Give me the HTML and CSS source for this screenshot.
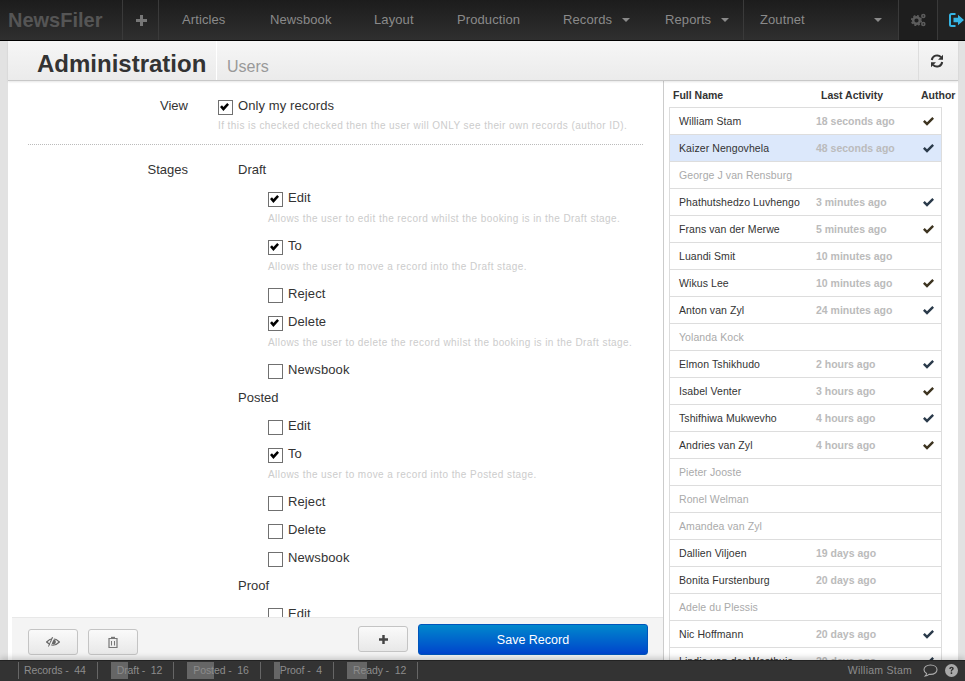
FILE: index.html
```html
<!DOCTYPE html>
<html lang="en">
<head>
    <meta charset="UTF-8">
    <title>NewsFiler - Administration</title>
    <link rel="stylesheet" href="styles.css">
</head>
<body>
    <svg class="defs" width="0" height="0">
        <symbol id="tick" viewBox="0 0 11 9"><path d="M0 4.800L1.700 3.100 4 5.300 9.300 0 11 1.700 4 8.800z"/></symbol>
    </svg>

    <nav class="topbar">
        <div class="brand">NewsFiler</div>
        <div class="add-item">
            <svg width="11" height="11" viewBox="0 0 11 11"><path d="M4 0h3v4h4v3H7v4H4V7H0V4h4z" fill="#777"/></svg>
        </div>
        <ul class="menu">
            <li class="w-articles">Articles</li>
            <li class="w-newsbook">Newsbook</li>
            <li class="w-layout">Layout</li>
            <li class="w-production">Production</li>
            <li class="w-records">Records<span class="caret"></span></li>
            <li class="w-reports">Reports<span class="caret"></span></li>
        </ul>
        <div class="publication">Zoutnet<span class="caret"></span></div>
        <div class="nav-icon gears">
            <svg width="15" height="14" viewBox="0 0 15 14"><circle cx="5.500" cy="7.500" r="3.300" fill="none" stroke="#5c5c5c" stroke-width="2.400"/><circle cx="5.500" cy="7.500" r="4.800" fill="none" stroke="#5c5c5c" stroke-width="1.600" stroke-dasharray="2 1.770"/><circle cx="12.300" cy="3" r="1.500" fill="none" stroke="#5c5c5c" stroke-width="1.600"/><circle cx="12.300" cy="11" r="1.500" fill="none" stroke="#5c5c5c" stroke-width="1.600"/></svg>
        </div>
        <div class="nav-icon logout">
            <svg width="15" height="14" viewBox="0 0 15 14"><path d="M6.500 1H2.500Q1 1 1 2.500v9Q1 13 2.500 13H6.500" fill="none" stroke="#35b5e5" stroke-width="2"/><path d="M4.500 4.800h4.500V1.800L15 7 9 12.200V9.200H4.500z" fill="#35b5e5"/></svg>
        </div>
    </nav>

    <div class="page">
        <header class="page-head">
            <h1>Administration</h1>
            <span class="sub">Users</span>
            <div class="refresh">
                <svg width="14" height="14" viewBox="0 0 14 14"><path d="M1.800 6A5.300 5.300 0 0 1 11 3.200" fill="none" stroke="#333" stroke-width="2"/><path d="M13 0.800v5H8z" fill="#333"/><path d="M12.200 8A5.300 5.300 0 0 1 3 10.800" fill="none" stroke="#333" stroke-width="2"/><path d="M1 13.200v-5h5z" fill="#333"/></svg>
            </div>
        </header>

        <div class="columns">
            <main class="form-pane">
                <div class="form-scroll">
                    <div class="field">
                        <div class="field-label">View</div>
                        <div class="field-body">
                            <label class="check top on">Only my records</label>
                            <p class="hint">If this is checked checked then the user will ONLY see their own records (author ID).</p>
                        </div>
                    </div>
                    <div class="field stages">
                        <div class="field-label">Stages</div>
                        <div class="field-body">
                            <div class="stage">Draft</div>
                            <div class="opts">
                                <label class="check on">Edit</label>
                                <p class="hint">Allows the user to edit the record whilst the booking is in the Draft stage.</p>
                                <label class="check on">To</label>
                                <p class="hint">Allows the user to move a record into the Draft stage.</p>
                                <label class="check">Reject</label>
                                <label class="check on">Delete</label>
                                <p class="hint">Allows the user to delete the record whilst the booking is in the Draft stage.</p>
                                <label class="check">Newsbook</label>
                            </div>
                            <div class="stage">Posted</div>
                            <div class="opts">
                                <label class="check">Edit</label>
                                <label class="check on">To</label>
                                <p class="hint">Allows the user to move a record into the Posted stage.</p>
                                <label class="check">Reject</label>
                                <label class="check">Delete</label>
                                <label class="check">Newsbook</label>
                            </div>
                            <div class="stage">Proof</div>
                            <div class="opts">
                                <label class="check">Edit</label>
                            </div>
                        </div>
                    </div>
                </div>
                <footer class="form-foot">
                    <button class="btn low">
                        <svg width="14" height="10" viewBox="0 0 14 10"><path d="M0.600 5Q7 -1.500 13.400 5Q7 11.500 0.600 5z" fill="none" stroke="#666" stroke-width="1.200"/><circle cx="7.500" cy="5" r="2.400" fill="#666"/><path d="M8 0L3.500 10" stroke="#f0f0f0" stroke-width="1.300"/><path d="M6.500 0L2.500 9.500" stroke="#666" stroke-width="1"/></svg>
                    </button>
                    <button class="btn low">
                        <svg width="10" height="12" viewBox="0 0 10 12"><path d="M1 2.500h8V11.500H1z" fill="#eee" stroke="#777" stroke-width="1.200"/><path d="M3 3V0.800h4V3z" fill="#777"/><path d="M3 5h1v4.500H3zM6 5h1v4.500H6z" fill="#777"/></svg>
                    </button>
                    <div class="spacer"></div>
                    <button class="btn high">
                        <svg width="9" height="9" viewBox="0 0 11 11"><path d="M4 0h3v4h4v3H7v4H4V7H0V4h4z" fill="#444"/></svg>
                    </button>
                    <button class="btn-save">Save Record</button>
                </footer>
            </main>

            <aside class="user-pane">
                <div class="user-head">
                    <span class="col-name">Full Name</span>
                    <span class="col-activity">Last Activity</span>
                    <span class="col-author">Author</span>
                </div>
                <ul class="user-list">
                    <li><span class="col-name">William Stam</span><span class="col-activity">18 seconds ago</span><svg class="tick brown"><use href="#tick"/></svg></li>
                    <li class="selected"><span class="col-name">Kaizer Nengovhela</span><span class="col-activity">48 seconds ago</span><svg class="tick"><use href="#tick"/></svg></li>
                    <li class="idle"><span class="col-name">George J van Rensburg</span></li>
                    <li><span class="col-name">Phathutshedzo Luvhengo</span><span class="col-activity">3 minutes ago</span><svg class="tick"><use href="#tick"/></svg></li>
                    <li><span class="col-name">Frans van der Merwe</span><span class="col-activity">5 minutes ago</span><svg class="tick brown"><use href="#tick"/></svg></li>
                    <li><span class="col-name">Luandi Smit</span><span class="col-activity">10 minutes ago</span></li>
                    <li><span class="col-name">Wikus Lee</span><span class="col-activity">10 minutes ago</span><svg class="tick brown"><use href="#tick"/></svg></li>
                    <li><span class="col-name">Anton van Zyl</span><span class="col-activity">24 minutes ago</span><svg class="tick"><use href="#tick"/></svg></li>
                    <li class="idle"><span class="col-name">Yolanda Kock</span></li>
                    <li><span class="col-name">Elmon Tshikhudo</span><span class="col-activity">2 hours ago</span><svg class="tick"><use href="#tick"/></svg></li>
                    <li><span class="col-name">Isabel Venter</span><span class="col-activity">3 hours ago</span><svg class="tick brown"><use href="#tick"/></svg></li>
                    <li><span class="col-name">Tshifhiwa Mukwevho</span><span class="col-activity">4 hours ago</span><svg class="tick"><use href="#tick"/></svg></li>
                    <li><span class="col-name">Andries van Zyl</span><span class="col-activity">4 hours ago</span><svg class="tick brown"><use href="#tick"/></svg></li>
                    <li class="idle"><span class="col-name">Pieter Jooste</span></li>
                    <li class="idle"><span class="col-name">Ronel Welman</span></li>
                    <li class="idle"><span class="col-name">Amandea van Zyl</span></li>
                    <li><span class="col-name">Dallien Viljoen</span><span class="col-activity">19 days ago</span></li>
                    <li><span class="col-name">Bonita Furstenburg</span><span class="col-activity">20 days ago</span></li>
                    <li class="idle"><span class="col-name">Adele du Plessis</span></li>
                    <li><span class="col-name">Nic Hoffmann</span><span class="col-activity">20 days ago</span><svg class="tick"><use href="#tick"/></svg></li>
                    <li><span class="col-name">Lindie van der Westhuis</span><span class="col-activity">20 days ago</span><svg class="tick"><use href="#tick"/></svg></li>
                </ul>
            </aside>
        </div>
    </div>

    <footer class="statusbar">
        <div class="stat first"><span>Records -&nbsp; 44</span></div>
        <div class="stat"><i class="fill" style="width: 17px"></i><span>Draft -&nbsp; 12</span></div>
        <div class="stat"><i class="fill" style="width: 27px"></i><span>Posted -&nbsp; 16</span></div>
        <div class="stat"><i class="fill" style="width: 6px"></i><span>Proof -&nbsp; 4</span></div>
        <div class="stat"><i class="fill" style="width: 20px"></i><span>Ready -&nbsp; 12</span></div>
        <div class="spacer"></div>
        <div class="status-user">William Stam</div>
        <svg class="status-icon" width="15" height="13" viewBox="0 0 15 13"><path d="M7.500 1C3.500 1 1 3.200 1 5.700c0 1.700 1.100 3 2.600 3.800C3.400 10.500 3 11.300 2.300 12c1.500-.2 2.800-.9 3.700-1.700.5.100 1 .1 1.500.1 4 0 6.500-2.200 6.500-4.700S11.500 1 7.500 1z" fill="none" stroke="#aaa" stroke-width="1.100"/></svg>
        <svg class="status-icon help" width="13" height="13" viewBox="0 0 13 13"><circle cx="6.500" cy="6.500" r="6.500" fill="#aaa"/><path d="M4.200 5Q4.300 2.800 6.600 2.800Q8.800 2.800 8.800 4.600Q8.800 5.700 7.500 6.300Q7 6.600 7 7.500H5.700Q5.700 6 6.500 5.500Q7.200 5.100 7.200 4.600Q7.200 4.100 6.500 4.100Q5.800 4.100 5.700 5zM5.700 8.300h1.500v1.600H5.700z" fill="#333"/></svg>
    </footer>
</body>
</html>
```

FILE: styles.css
```css
* {
    box-sizing: border-box;
}

html, body {
    height: 100%;
}

body {
    margin: 0;
    height: 681px;
    overflow: hidden;
    display: flex;
    flex-direction: column;
    font-family: "Liberation Sans", Arial, sans-serif;
    font-size: 13px;
    color: #333;
    background-color: #e2e2e2;
}

.defs {
    position: absolute;
}

/* top bar */
.topbar {
    height: 41px;
    flex: none;
    display: flex;
    background: linear-gradient(to bottom, #1c1c1c, #2f2f2f);
    border-bottom: 1px solid #000;
    color: #8a8a8a;
    letter-spacing: 0.1px;
}

.brand {
    width: 123px;
    padding-left: 8px;
    font-size: 20px;
    font-weight: bold;
    line-height: 40px;
    color: #555;
    letter-spacing: 0;
    border-right: 1px solid #3a3a3a;
}

.add-item {
    width: 36px;
    padding-left: 2px;
    display: flex;
    align-items: center;
    justify-content: center;
    border-right: 1px solid #3a3a3a;
}

.menu {
    display: flex;
    margin: 0;
    padding: 0;
    list-style: none;
    line-height: 39px;
}

.menu li {
    padding-left: 22px;
}

.menu .w-articles { width: 89px; padding-left: 23px; }
.w-newsbook { width: 104px; }
.w-layout { width: 83px; }
.w-production { width: 106px; }
.w-records { width: 102px; }
.w-reports { width: 100px; }

.caret {
    display: inline-block;
    margin-left: 10px;
    vertical-align: 2px;
    border-left: 4px solid transparent;
    border-right: 4px solid transparent;
    border-top: 4px solid #8a8a8a;
}

.publication {
    width: 155px;
    padding-left: 16px;
    line-height: 39px;
    border-left: 1px solid #3a3a3a;
    position: relative;
}

.publication .caret {
    position: absolute;
    right: 16px;
    top: 18px;
    margin: 0;
}

.nav-icon {
    display: flex;
    align-items: center;
    justify-content: center;
}

.gears {
    width: 40px;
    background-color: #1e1e1e;
    border-left: 1px solid #3a3a3a;
    border-right: 1px solid #3a3a3a;
}

.logout {
    flex: 1;
    background-color: #222;
    justify-content: flex-start;
    padding-left: 11px;
}

/* page */
.page {
    flex: 1;
    min-height: 0;
    margin-left: 8px;
    margin-right: 7px;
    display: flex;
    flex-direction: column;
    background-color: #fff;
}

.page-head {
    height: 40px;
    flex: none;
    display: flex;
    align-items: stretch;
    background: linear-gradient(to bottom, #f6f6f6, #ebebeb);
    border-bottom: 1px solid #c8c8c8;
    box-shadow: 0 1px 2px rgba(0, 0, 0, 0.1);
    position: relative;
}

.page-head h1 {
    margin: 0;
    width: 209px;
    padding-left: 29px;
    font-size: 24px;
    line-height: 45px;
    font-weight: bold;
    color: #333;
    border-right: 1px solid #fff;
    white-space: nowrap;
}

.sub {
    padding-left: 10px;
    font-size: 16px;
    line-height: 51px;
    color: #999;
}

.refresh {
    margin-left: auto;
    width: 40px;
    padding-right: 4px;
    display: flex;
    align-items: center;
    justify-content: center;
    border-left: 1px solid #ddd;
}

.columns {
    flex: 1;
    min-height: 0;
    display: flex;
}

/* form */
.form-pane {
    width: 656px;
    flex: none;
    display: flex;
    flex-direction: column;
    background-color: #fff;
    border-right: 1px solid #ccc;
}

.form-scroll {
    flex: 1;
    min-height: 0;
    overflow: hidden;
    padding: 15px 20px 0;
}

.field {
    display: flex;
}

.field-label {
    width: 160px;
    flex: none;
    text-align: right;
    line-height: 20px;
}

.field-body {
    margin-left: 30px;
    flex: 1;
}

.stages {
    padding-top: 15px;
    border-top: 1px dotted #bbb;
}

.stage {
    height: 28px;
    padding-left: 20px;
    line-height: 20px;
}

.opts {
    padding-left: 50px;
}

.check {
    display: block;
    height: 28px;
    line-height: 20px;
    padding-left: 20px;
    position: relative;
    letter-spacing: 0.1px;
}

.check.top {
    height: 20px;
}

.check::before {
    content: "";
    position: absolute;
    left: 0;
    top: 4px;
    width: 13px;
    height: 13px;
    background-color: #fff;
    border: 1px solid #707070;
}

.check.on::after {
    content: "";
    position: absolute;
    left: 2px;
    top: 7px;
    width: 9px;
    height: 8px;
    background-color: #000;
    clip-path: polygon(0 50%, 22% 28%, 38% 50%, 80% 0, 100% 22%, 38% 100%);
}

.hint {
    height: 20px;
    margin: -7px 0 7px;
    line-height: 20px;
    font-size: 10px;
    letter-spacing: 0.43px;
    color: #ccc;
    white-space: nowrap;
}

.check.top + .hint {
    margin-top: 0;
    margin-bottom: 8px;
}

/* form footer */
.form-foot {
    height: 43px;
    flex: none;
    margin-left: 4px;
    padding-right: 15px;
    display: flex;
    background-color: #f4f4f4;
    border-top: 1px solid #e8e8e8;
}

.spacer {
    flex: 1;
}

.btn {
    width: 50px;
    height: 26px;
    margin-right: 10px;
    padding: 0;
    display: flex;
    align-items: center;
    justify-content: center;
    background: linear-gradient(to bottom, #fafafa, #e8e8e8);
    border: 1px solid #c4c4c4;
    border-radius: 3px;
}

.btn.low {
    margin-top: 11px;
}

.btn.low:first-child {
    margin-left: 16px;
}

.btn.high {
    margin-top: 8px;
}

.btn-save {
    width: 230px;
    height: 31px;
    margin-top: 6px;
    padding: 0;
    font: 12.5px "Liberation Sans", Arial, sans-serif;
    color: #fff;
    background: linear-gradient(to bottom, #0088cc, #0044cc);
    border: 1px solid #0055bb;
    border-radius: 3px;
}

/* user list */
.user-pane {
    flex: 1;
    min-width: 0;
    overflow: hidden;
    padding-left: 5px;
    background-color: #fff;
}

.user-head {
    height: 26px;
    display: flex;
    align-items: center;
    padding: 1px 0 0 4px;
    font-size: 10.5px;
    font-weight: bold;
    color: #333;
    white-space: nowrap;
}

.user-head .col-name {
    width: 148px;
}

.user-head .col-activity {
    width: 100px;
}

.user-list {
    width: 273px;
    margin: 0;
    padding: 0;
    list-style: none;
    background-color: #fff;
    border: 1px solid #ddd;
    border-bottom: 0;
    font-size: 10.5px;
    letter-spacing: 0.08px;
}

.user-list li {
    height: 27px;
    display: flex;
    align-items: center;
    padding-left: 9px;
    border-bottom: 1px solid #ddd;
    white-space: nowrap;
}

.user-list .col-name {
    width: 137px;
    flex: none;
    color: #333;
}

.user-list .col-activity {
    width: 107px;
    flex: none;
    font-weight: bold;
    color: #bbb;
    letter-spacing: 0;
}

.user-list .idle .col-name {
    color: #aaa;
}

.user-list .selected {
    background-color: #dce8fb;
}

.tick {
    width: 11px;
    height: 9px;
    fill: #2a3a4a;
}

.tick.brown {
    fill: #3d3420;
}

/* status bar */
.statusbar {
    height: 21px;
    flex: none;
    display: flex;
    align-items: stretch;
    padding-left: 18px;
    padding-right: 7px;
    font-size: 10.5px;
    letter-spacing: -0.1px;
    color: #8c8c8c;
    background-color: #333;
    border-top: 1px solid #222;
    box-shadow: 0 -2px 6px rgba(0, 0, 0, 0.2);
    position: relative;
    z-index: 1;
    white-space: nowrap;
}

.stat {
    position: relative;
    height: 17px;
    margin-top: 1px;
    padding: 0 11px 0 19px;
    line-height: 17px;
    border-right: 1px solid #666;
}

.stat span {
    position: relative;
}

.stat.first {
    padding-left: 5px;
    border-left: 1px solid #666;
}

.fill {
    position: absolute;
    left: 13px;
    top: 0;
    bottom: 0;
    background-color: #666;
}

.status-user {
    line-height: 19px;
    margin-right: 11px;
    letter-spacing: 0.25px;
}

.status-icon {
    margin-top: 3px;
    margin-right: 7px;
}

.status-icon.help {
    margin-right: 0;
}
```
